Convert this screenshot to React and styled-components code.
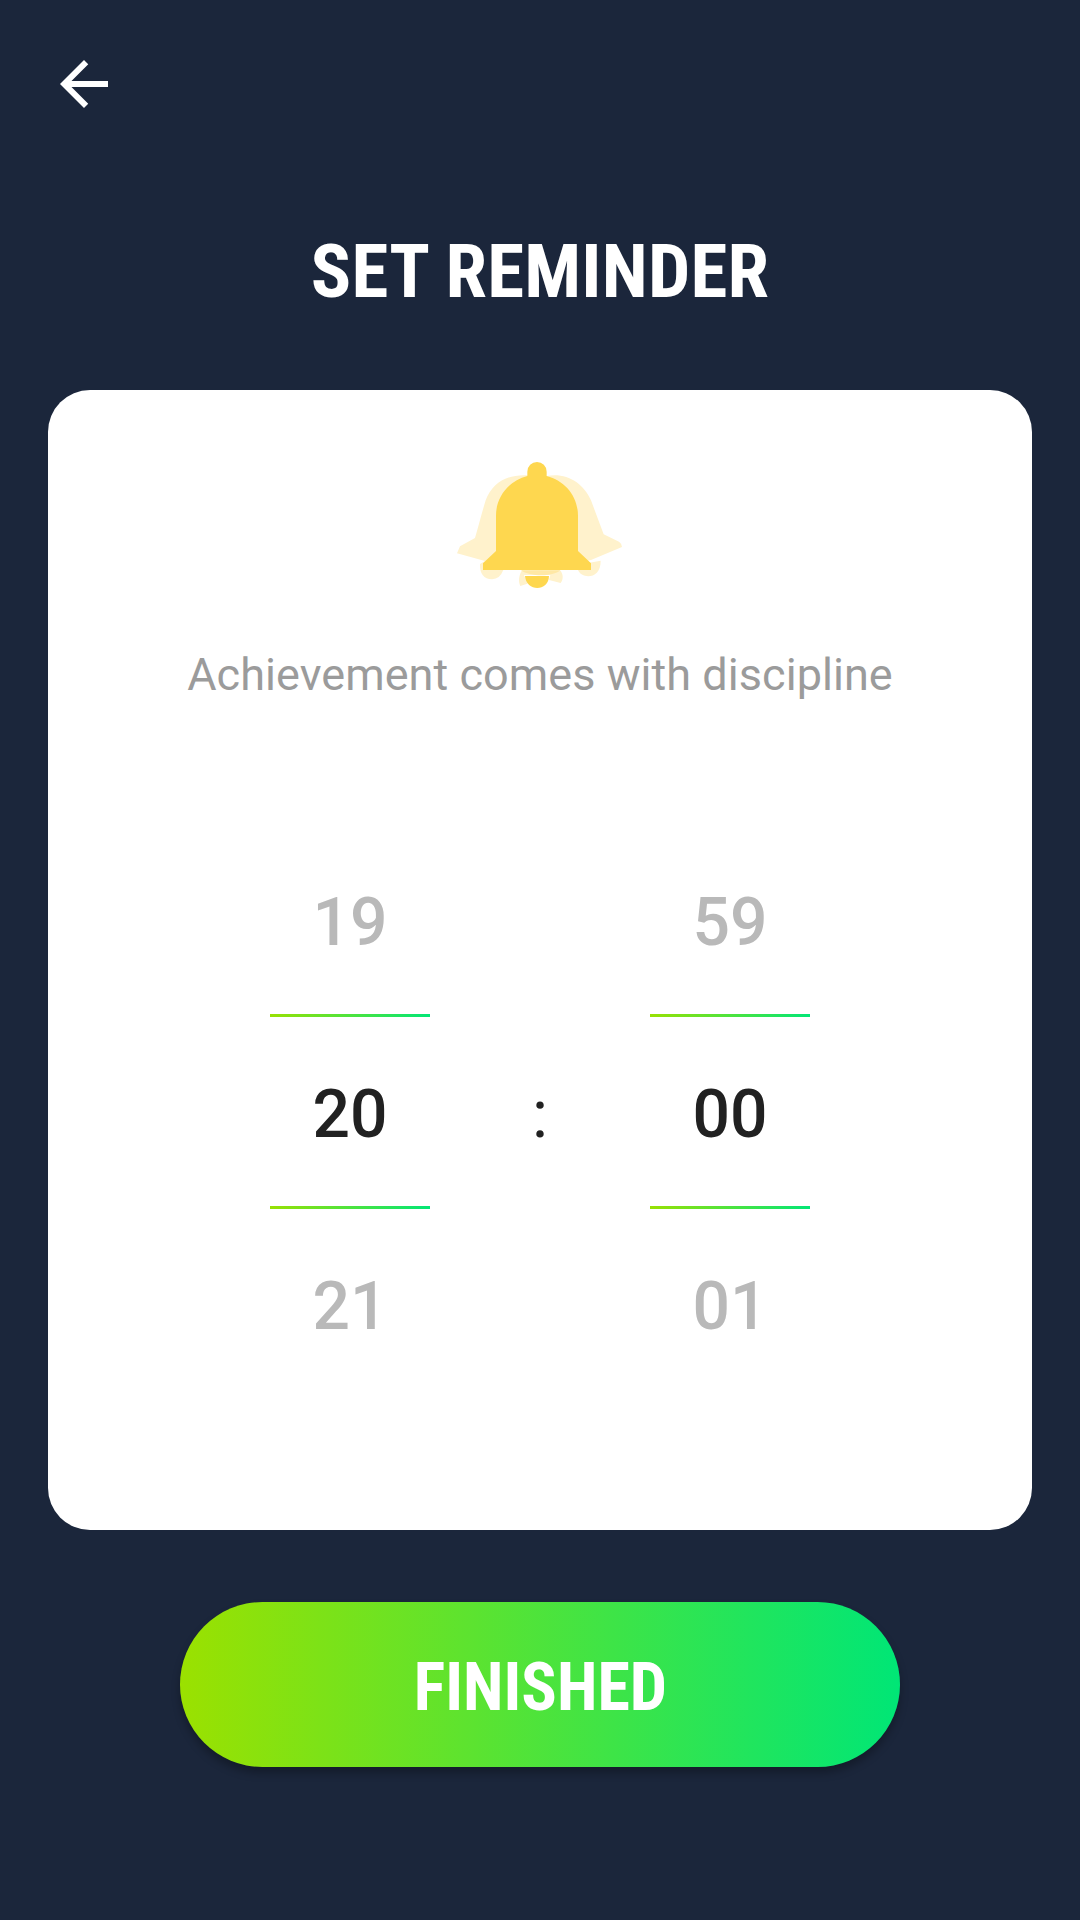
import React from "react";
import styled, { createGlobalStyle } from "styled-components";

const GlobalStyle = createGlobalStyle`
  * { box-sizing: border-box; }
  body { margin: 0; background: #1b263b; }
`;

const Screen = styled.main`
  display: flex;
  flex-direction: column;
  align-items: center;
  width: 1080px;
  height: 1920px;
  background: #1b263b;
  font-family: Roboto, sans-serif;
`;

const TopBar = styled.header`
  display: flex;
  width: 100%;
  padding: 48px 48px 0;
`;

const BackButton = styled.button`
  width: 72px;
  height: 72px;
  padding: 0;
  border: 0;
  background: none;
  svg { display: block; }
`;

const Title = styled.h1`
  margin: 107px 0 0;
  height: 88px;
  color: #fff;
  font: 700 75px/88px "Roboto Condensed", Roboto, sans-serif;
  font-stretch: 75%;
  letter-spacing: 0.22px;
  white-space: nowrap;
`;

const Card = styled.section`
  display: flex;
  flex-direction: column;
  align-items: center;
  width: 984px;
  height: 1140px;
  margin-top: 75px;
  padding-top: 55px;
  border-radius: 42px;
  background: #fff;
`;

const BellIcon = styled.svg`
  display: block;
  width: 200px;
  height: 160px;
`;

const Caption = styled.p`
  margin: 43px 0 0;
  color: #9b9b9b;
  font-size: 45px;
  line-height: 54px;
  letter-spacing: 0.05px;
  white-space: nowrap;
`;

const TimePicker = styled.div`
  display: flex;
  align-items: center;
  justify-content: center;
  margin-top: 125px;
`;

const Wheel = styled.div`
  width: 160px;
`;

const Value = styled.div`
  height: 192px;
  color: ${(p) => (p.$selected ? "#212121" : "#b9b9b9")};
  font-size: 66px;
  font-weight: 500;
  line-height: 192px;
  text-align: center;
`;

const Divider = styled.div`
  height: 3px;
  margin: -5px 0 2px;
  background: linear-gradient(90deg, #98e104, #02e676);
`;

const Colon = styled.span`
  width: 220px;
  color: #212121;
  font-size: 66px;
  line-height: 192px;
  text-align: center;
`;

const FinishButton = styled.button`
  width: 720px;
  height: 165px;
  margin-top: 72px;
  padding: 6px 0 0 1px;
  border: 0;
  border-radius: 83px;
  background: linear-gradient(90deg, #9be100, #00e676);
  box-shadow: 0 6px 9px rgba(0, 0, 0, 0.28);
  color: #fff;
  font: 700 66px/78px "Roboto Condensed", Roboto, sans-serif;
  font-stretch: 75%;
`;

const BellShape = () => (
  <path d="M262 93V80A29 29 0 0 1 320 80V93C375 107 414 154 414 212V318L453 355V375H129V355L168 318V212C168 154 207 107 262 93Z" />
);

const Bell = () => (
  <BellIcon viewBox="0 0 600 480">
    <g fill="#fff2cc">
      <path d="M262 91C205 87 157 112 137 166C124 208 115 246 105 279L60 304L51 325L135 348L300 380V91Z" />
      <path d="M320 93C380 82 429 113 453 166L491 268L537 290Q544 294 546 306L453 345L290 380V93Z" />
      <path d="M120 357Q119 402 156 403Q180 402 190 375L135 348Z" />
      <path d="M414 375C424 402 483 405 482 347L440 355Z" />
      <path d="M246 376C236 392 235 410 241 423L262 416L252 390H331L327 405L362 414C371 404 370 386 360 376Z" />
    </g>
    <path fill="#ffe8a5" d="M243 376H361C338 396 270 396 243 376Z" />
    <g fill="#fed74f">
      <BellShape />
      <path d="M255 393H327C326 441 258 441 255 393Z" />
    </g>
  </BellIcon>
);

const TimeWheel = ({ values }) => (
  <Wheel>
    <Value>{values[0]}</Value>
    <Divider />
    <Value $selected>{values[1]}</Value>
    <Divider />
    <Value>{values[2]}</Value>
  </Wheel>
);

export default function App() {
  return (
    <Screen>
      <GlobalStyle />
      <TopBar>
        <BackButton aria-label="Back">
          <svg width="72" height="72" viewBox="0 0 24 24" fill="#fff">
            <path d="M20 11H7.83l5.59-5.59L12 4l-8 8 8 8 1.41-1.41L7.83 13H20v-2z" />
          </svg>
        </BackButton>
      </TopBar>
      <Title>SET REMINDER</Title>
      <Card>
        <Bell />
        <Caption>Achievement comes with discipline</Caption>
        <TimePicker>
          <TimeWheel values={["19", "20", "21"]} />
          <Colon>:</Colon>
          <TimeWheel values={["59", "00", "01"]} />
        </TimePicker>
      </Card>
      <FinishButton>FINISHED</FinishButton>
    </Screen>
  );
}
